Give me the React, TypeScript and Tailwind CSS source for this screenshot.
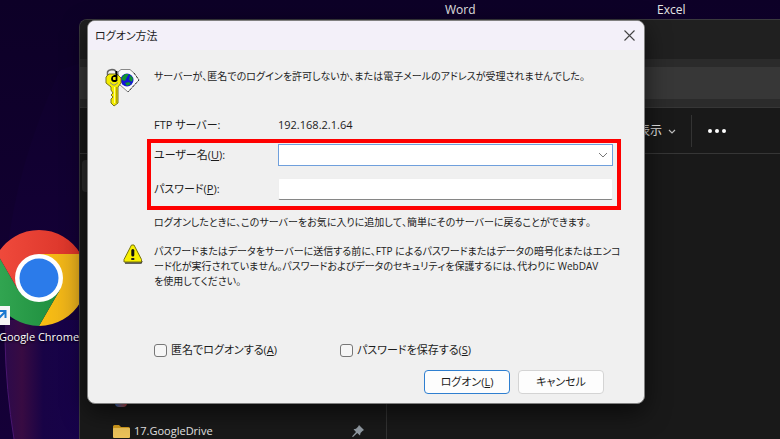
import type { ReactNode } from "react";

const uiFont =
  "[font-family:'Open_Sans','Noto_Sans_CJK_JP',sans-serif] [font-feature-settings:'palt']";

const sentence = "text-[10px] [font-feature-settings:'palt','kern'_0]";

function KeyIcon() {
  return (
    <svg className="h-10 w-9" viewBox="0 0 36 40" aria-hidden="true">
      <path d="M13 4 L16 1.500 H25 L29 5 L34 12 L23 24 L14 16 Z" fill="#fafafa" stroke="#888" />
      <path d="M29 5 L34 12 L23 24" fill="none" stroke="#333" strokeDasharray="2 2" />
      <circle cx="22" cy="12" r="6.500" fill="#1414d8" />
      <path d="M17 9 L20 6 L24 6 L22 9 L20 13 L17 12 Z M25 7 L28 10 L27 14 L24 12 Z M20 15 L24 14 L26 16 L22 18 Z" fill="#0f9430" />
      <path d="M2.500 8 V4 Q3 2 7 1.500 Q11 1.500 11 5 V8" fill="none" stroke="#666" strokeWidth="1.500" />
      <path
        d="M4 6 L12 6 L16 10 L16 15 L13 19 L13 35 L9 38 L6 35 V31 L8 29 L6 27 L8 25 L6 22 V19 L1 15 V9 Z"
        fill="#f4ec00"
        stroke="#77741c"
      />
      <path d="M9.500 19 V35" stroke="#fffb90" />
      <path d="M11.500 19 V35" stroke="#b5a800" />
      <path d="M11.500 3 V13 M11.500 8 H9 Q7 8.500 7 10.500 Q7 13 9 13 H11.500" fill="none" stroke="#000" strokeWidth="1.800" />
      <path d="M5 14.500 L8 17 H10 L13 14.500" fill="none" stroke="#888" />
    </svg>
  );
}

function WarningIcon() {
  return (
    <svg className="h-5 w-5" viewBox="0 0 20 20" aria-hidden="true">
      <path d="M2 19 H18 L19 17" fill="none" stroke="#333" strokeWidth="1.500" />
      <path d="M8.500 1 H11 L18.500 15.500 V18 H1 V15.500 Z" fill="#f8f000" stroke="#77730a" strokeLinejoin="round" />
      <path d="M9.800 6.500 V11" stroke="#111" strokeWidth="3" strokeLinecap="round" />
      <rect x="8.300" y="14" width="3" height="2" fill="#222" />
    </svg>
  );
}

function ChromeShortcut() {
  return (
    <div className="absolute top-[229px] left-[-10px] flex w-[98px] flex-col items-center">
      <svg className="h-[98px] w-[98px]" viewBox="0 0 98 98" aria-hidden="true">
        <defs>
          <linearGradient id="cr" x1="0" x2="1">
            <stop offset="0" stopColor="#f04a3c" />
            <stop offset="1" stopColor="#d93328" />
          </linearGradient>
          <linearGradient id="cy" x1="0" x2="1">
            <stop offset="0" stopColor="#fcc010" />
            <stop offset="1" stopColor="#e0a820" />
          </linearGradient>
          <linearGradient id="cg" x1="0" x2="1">
            <stop offset="0" stopColor="#34a853" />
            <stop offset="1" stopColor="#1e8e3e" />
          </linearGradient>
        </defs>
        <path d="M49 25 H90.600 A48 48 0 0 1 49 97 L69.800 61 Z" fill="url(#cy)" />
        <path d="M28.200 61 L7.400 25 A48 48 0 0 0 49 97 L69.800 61 Z" fill="url(#cg)" />
        <path d="M49 25 H90.600 A48 48 0 0 0 7.400 25 L28.200 61 Z" fill="url(#cr)" />
        <circle cx="49" cy="49" r="24" fill="#fff" />
        <circle cx="49" cy="49" r="19.500" fill="#2b7bea" />
        <rect x="2" y="77" width="18" height="19" fill="#f5f5f5" />
        <path d="M8 90 L15 83 M9 82 H15.500 V89" fill="none" stroke="#1878d0" strokeWidth="2" />
      </svg>
      <span className="text-[11px] leading-5 whitespace-nowrap text-white [text-shadow:0_1px_2px_#000]">
        Google Chrome
      </span>
    </div>
  );
}

function Explorer() {
  return (
    <section className="absolute top-[19px] right-0 bottom-0 left-[79px] flex flex-col overflow-hidden rounded-tl-lg border-t border-l border-[#3a3a3d] bg-[#191919] text-[#e6e6e6]">
      <div className="h-[39px] shrink-0 bg-[#202020]" />
      <div className="h-12 shrink-0 bg-[#2b2b2b] py-2">
        <div className="h-8 bg-[#373737]" />
      </div>
      <div className="flex h-[47px] shrink-0 items-center border-y border-[#363636] pl-[558px]">
        <button className="flex items-center gap-1 text-xs">
          表示
          <svg className="h-3 w-3" viewBox="0 0 12 12" aria-hidden="true">
            <path d="M3 5 L6 8 L9 5" fill="none" stroke="#bbb" strokeWidth="1.200" />
          </svg>
        </button>
        <div className="ml-[13px] h-8 w-px bg-[#333]" />
        <button className="ml-4 flex gap-[3px]" aria-label="もっと見る">
          <span className="h-1 w-1 rounded-full bg-white" />
          <span className="h-1 w-1 rounded-full bg-white" />
          <span className="h-1 w-1 rounded-full bg-white" />
        </button>
      </div>
      <div className="flex flex-1 overflow-hidden">
        <nav className="flex w-[307px] shrink-0 flex-col border-r border-[#333] pt-[6px]">
          <div className="ml-[2px] h-8 shrink-0 rounded bg-[#2d2d2d]" />
          <div className="mt-[195px] flex h-5 shrink-0 items-end pl-[35px]">
            <span className="h-4 w-3 rounded-b-sm bg-linear-to-r from-[#2a6fc0] to-[#c43c3c]" />
          </div>
          <div className="mt-[10px] flex h-7 shrink-0 items-center pr-[22px] pl-[33px]">
            <svg className="h-[13px] w-[17px]" viewBox="0 0 17 13" aria-hidden="true">
              <path d="M0 1.500 Q0 0 1.500 0 H6 L8 2 H15.500 Q17 2 17 3.500 V11 H0 Z" fill="#d19a1c" />
              <rect y="3" width="17" height="10" rx="1" fill="#ecc35a" />
            </svg>
            <span className="ml-1 flex-1 text-[11px]">17.GoogleDrive</span>
            <svg className="h-3 w-3" viewBox="0 0 12 12" aria-hidden="true">
              <path d="M7 0 L12 5 L10.500 6 L8.500 8 L8 10.500 L5.200 8 L1 12 L0 11.500 L4 7 L1.500 4.200 L4 3.700 L6 1.700 Z" fill="#929ba3" />
            </svg>
          </div>
        </nav>
      </div>
    </section>
  );
}

function Check({ id, children }: { id: string; children: ReactNode }) {
  return (
    <div className="flex items-center gap-1">
      <input
        id={id}
        type="checkbox"
        className="h-[13px] w-[13px] appearance-none rounded-[3px] border border-[#777] bg-[#f6f6f6] checked:bg-[#0067c0]"
      />
      <label htmlFor={id}>{children}</label>
    </div>
  );
}

function LogonDialog() {
  return (
    <section
      role="dialog"
      aria-labelledby="title"
      className="absolute top-5 right-[135px] left-[87px] overflow-hidden rounded-lg border border-[#808080] bg-[#f0f0f0] text-[11px] leading-5 text-[#1c1c1c] shadow-[0_8px_24px_rgba(0,0,0,0.6)]"
    >
      <header className="flex h-[29px] items-center justify-between bg-[#f3f0f9] pr-2 pl-[7px]">
        <h1 id="title">ログオン方法</h1>
        <button aria-label="閉じる" className="p-[1px]">
          <svg className="h-[11px] w-[11px]" viewBox="0 0 11 11" aria-hidden="true">
            <path d="M0.500 0.500 L10.500 10.500 M10.500 0.500 L0.500 10.500" stroke="#444" strokeWidth="1.100" />
          </svg>
        </button>
      </header>
      <form className="pt-4 pb-[9px]" onSubmit={(e) => e.preventDefault()}>
        <div className="flex h-[49px]">
          <div className="w-[66px] shrink-0 pt-[2px] pl-[17px]">
            <KeyIcon />
          </div>
          <p className={sentence}>
            サーバーが、匿名でのログインを許可しないか、または電子メールのアドレスが受理されませんでした。
          </p>
        </div>
        <div className="flex pl-[66px]">
          <span className="w-[124px]">FTP サーバー:</span>
          <span>192.168.2.1.64</span>
        </div>
        <div className="mt-1 mr-[23px] ml-[59px] flex flex-col gap-3 border-4 border-[#fe0000] pt-[1px] pr-1 pb-[6px] pl-[3px]">
          <div className="flex h-[22px] items-center">
            <label htmlFor="user" className="w-[124px] shrink-0">
              ユーザー名(<u>U</u>):
            </label>
            <div className="flex h-full flex-1 items-center border border-[#6f9fdc] bg-white pr-1">
              <input id="user" className="min-w-0 flex-1 bg-transparent px-1 outline-none" />
              <button type="button" aria-label="履歴">
                <svg className="h-[10px] w-[10px]" viewBox="0 0 10 10" aria-hidden="true">
                  <path d="M1 3 L5 7 L9 3" fill="none" stroke="#777" />
                </svg>
              </button>
            </div>
          </div>
          <div className="flex h-[22px] items-center">
            <label htmlFor="pass" className="w-[124px] shrink-0">
              パスワード(<u>P</u>):
            </label>
            <input
              id="pass"
              type="password"
              className="h-full min-w-0 flex-1 rounded-xs border border-[#efefef] border-b-[#868686] bg-white px-1 outline-none"
            />
          </div>
        </div>
        <p className={`mt-[2px] pl-[66px] ${sentence}`}>
          ログオンしたときに、このサーバーをお気に入りに追加して、簡単にそのサーバーに戻ることができます。
        </p>
        <div className="mt-3 flex">
          <div className="w-[66px] shrink-0 pl-[35px]">
            <WarningIcon />
          </div>
          <p className={`leading-[15px] whitespace-nowrap ${sentence}`}>
            パスワードまたはデータをサーバーに送信する前に、FTP によるパスワードまたはデータの暗号化またはエンコ
            <br />
            ード化が実行されていません。パスワードおよびデータのセキュリティを保護するには、代わりに WebDAV
            <br />
            を使用してください。
          </p>
        </div>
        <div className="mt-[51px] flex pl-[66px]">
          <div className="w-[186px]">
            <Check id="anon">
              匿名でログオンする(<u>A</u>)
            </Check>
          </div>
          <Check id="save">
            パスワードを保存する(<u>S</u>)
          </Check>
        </div>
        <div className="mt-[10px] flex justify-end gap-2 pr-10">
          <button type="submit" className="h-6 w-[86px] rounded border border-[#2f7fd0] bg-[#fdfdfd]">
            ログオン(<u>L</u>)
          </button>
          <button type="button" className="h-6 w-[86px] rounded border border-[#d4d4d4] bg-[#fdfdfd]">
            キャンセル
          </button>
        </div>
      </form>
    </section>
  );
}

function Wallpaper() {
  return (
    <svg className="absolute inset-y-0 left-0 h-full w-[90px]" viewBox="0 0 90 439" preserveAspectRatio="none" aria-hidden="true">
      <defs>
        <linearGradient id="wave" x1="0" x2="1">
          <stop offset="0" stopColor="#2c0a4c" />
          <stop offset="0.200" stopColor="#380b42" />
          <stop offset="0.450" stopColor="#180346" />
          <stop offset="1" stopColor="#16024a" />
        </linearGradient>
        <linearGradient id="fade" x1="0" x2="0" y1="0" y2="1">
          <stop offset="0" stopColor="#0f002c" />
          <stop offset="1" stopColor="#17003f" />
        </linearGradient>
      </defs>
      <path d="M60 70 Q0 200 5 320 L14 439 H90 V60 Z" fill="url(#fade)" />
      <path d="M5 320 Q4 370 14 439 H90 V320 Z" fill="url(#wave)" />
      <path d="M5 340 Q6 390 14 439" fill="none" stroke="#4a1670" />
    </svg>
  );
}

export default function App() {
  return (
    <main lang="ja" className={`relative h-screen overflow-hidden bg-linear-to-b from-[#0d0027] to-[#150038] ${uiFont}`}>
      <Wallpaper />
      <span className="absolute top-0 left-[445px] text-xs leading-5 text-[#e4e4e4]">Word</span>
      <span className="absolute top-0 left-[657px] text-xs leading-5 text-[#e4e4e4]">Excel</span>
      <ChromeShortcut />
      <Explorer />
      <LogonDialog />
    </main>
  );
}
